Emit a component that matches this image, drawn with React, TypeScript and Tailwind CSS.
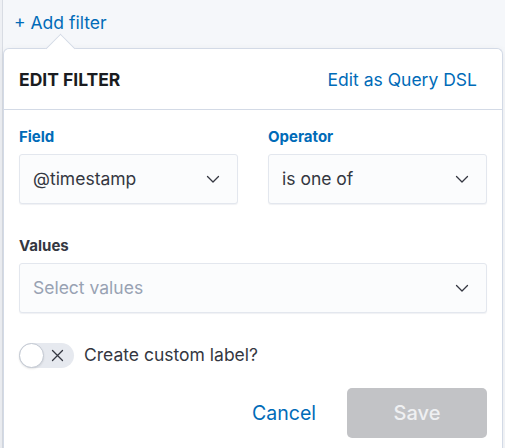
import React from "react";

function Chevron() {
  return (
    <svg width="16" height="16" viewBox="0 0 16 16" fill="none" className="shrink-0">
      <path d="M2.5 5.5 8 11l5.5-5.5" stroke="#343741" strokeWidth="1.3" strokeLinecap="round" strokeLinejoin="round" />
    </svg>
  );
}

function SelectBox({ value, placeholder }: { value?: string; placeholder?: string }) {
  return (
    <div className="flex h-[50px] items-center justify-between rounded-[3px] border border-[#e3e7ee] bg-[#fbfcfd] pl-[13px] pr-[16px] shadow-[0_1px_1px_rgba(152,162,179,0.15)]">
      {value ? (
        <span className="text-[17.5px] text-[#343741]">{value}</span>
      ) : (
        <span className="text-[17.5px] text-[#98a2b3]">{placeholder}</span>
      )}
      <Chevron />
    </div>
  );
}

export default function App() {
  return (
    <div className="relative h-[448px] w-[505px] overflow-hidden bg-[#f5f7fa] font-['Inter','Noto_Sans',sans-serif]">
      <div className="absolute left-0 top-0 h-full w-[3px] border-r border-[#d8dce3] bg-[#eef0f4]" />
      <div className="flex h-[48px] items-start pl-[14px] pt-[10px]">
        <span className="text-[17.5px] text-[#006bb8]">+ Add filter</span>
      </div>

      <div className="relative ml-[3px] mr-[2px] rounded-t-[6px] border border-b-0 border-[#d3dae6] bg-white shadow-[0_2px_8px_rgba(0,0,0,0.06)]">
        <div className="absolute left-[46px] top-[-11px] h-[21px] w-[21px] rotate-45 border-l border-t border-[#d3dae6] bg-white" />
        <div className="relative flex h-[61px] items-center justify-between border-b border-[#d3dae6] px-[15px] pt-[3px]">
          <span className="text-[17.5px] font-bold text-[#1a1c21]">EDIT FILTER</span>
          <span className="mr-[10px] text-[17.5px] text-[#006bb8]">Edit as Query DSL</span>
        </div>

        <div className="px-[15px] pt-[16px]">
          <div className="grid grid-cols-2 gap-[30px]">
            <div>
              <div className="mb-[6px] h-[22px] text-[15px] font-bold leading-[22px] text-[#006bb8]">Field</div>
              <SelectBox value="@timestamp" />
            </div>
            <div>
              <div className="mb-[6px] h-[22px] text-[15px] font-bold leading-[22px] text-[#006bb8]">Operator</div>
              <SelectBox value="is one of" />
            </div>
          </div>

          <div className="mt-[31px]">
            <div className="mb-[6px] h-[22px] text-[15px] font-bold leading-[22px] text-[#343741]">Values</div>
            <SelectBox placeholder="Select values" />
          </div>

          <div className="mt-[29px] flex items-center gap-[10px]">
            <div className="relative h-[25px] w-[55px] rounded-full bg-[#e6e9ef]">
              <div className="absolute left-0 top-0 h-[25px] w-[25px] rounded-full border border-[#c2c8d2] bg-white shadow-[0_1px_2px_rgba(0,0,0,0.1)]" />
              <svg className="absolute left-[32px] top-[6px]" width="13" height="13" viewBox="0 0 13 13" fill="none">
                <path d="M1.5 1.5l10 10M11.5 1.5l-10 10" stroke="#343741" strokeWidth="1.3" strokeLinecap="round" />
              </svg>
            </div>
            <span className="text-[17.5px] text-[#343741]">Create custom label?</span>
          </div>

          <div className="mt-[20px] flex items-center justify-end gap-[31px] pb-[20px]">
            <span className="text-[19.5px] text-[#006bb8]">Cancel</span>
            <div className="flex h-[50px] w-[140px] items-center justify-center rounded-[5px] bg-[#c2c3c6] text-[20px] font-medium text-[#eff0f2]">
              Save
            </div>
          </div>
        </div>
      </div>
    </div>
  );
}
